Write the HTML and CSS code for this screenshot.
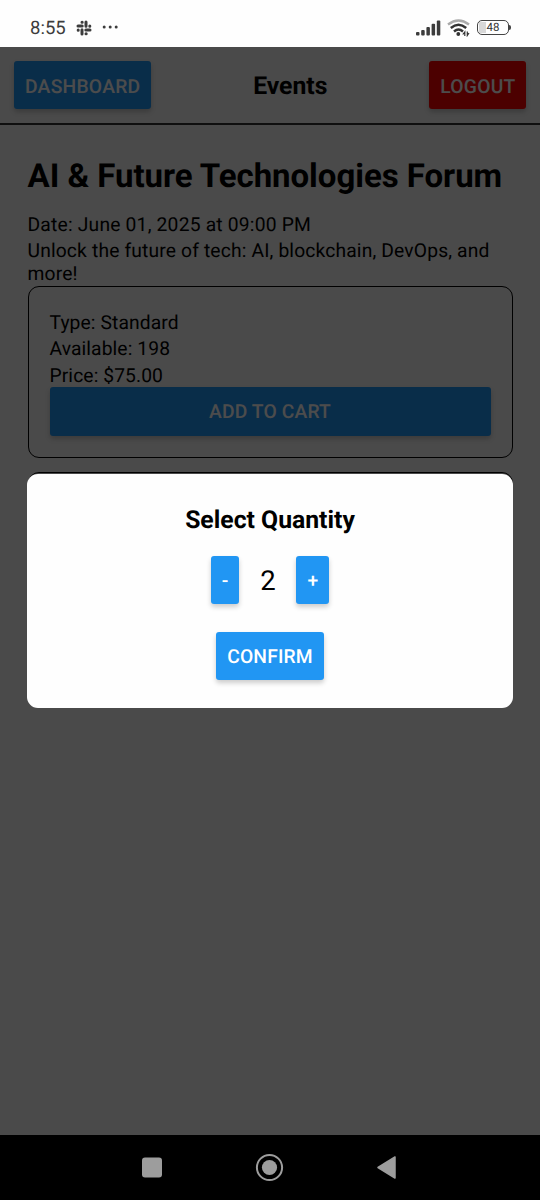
FILE: index.html
```html
<!DOCTYPE html>
<html lang="en">
<head>
<meta charset="utf-8">
<title>Events</title>
<link rel="stylesheet" href="styles.css">
</head>
<body>
<div class="status">
  <span class="clock">8:55</span>
  <svg class="slack" width="16" height="16" viewBox="0 0 16 16" fill="none" stroke="#3c3c3c" stroke-width="3" stroke-linecap="round"><path d="M2 6h4.200M10 2v4.200M9.800 10H14M6 9.800V14M6 2.200h.2M13.800 6v.2M10 13.800h.2M2.200 10v.2"/></svg>
  <svg class="dots" width="18" height="4" viewBox="0 0 18 4" fill="#3c3c3c"><circle cx="2.200" cy="2" r="1.500"/><circle cx="8.200" cy="2" r="1.500"/><circle cx="14.200" cy="2" r="1.500"/></svg>
  <span class="grow"></span>
  <svg class="signal" width="25" height="16" viewBox="0 0 25 16" fill="#3c3c3c"><rect x="0" y="12" width="3.500" height="3.500" rx="1"/><rect x="5.200" y="10" width="3.500" height="5.500" rx="1"/><rect x="10.400" y="7" width="3.500" height="8.500" rx="1"/><rect x="15.600" y="3.800" width="3.500" height="11.700" rx="1"/><rect x="20.800" y=".5" width="3.500" height="15" rx="1"/></svg>
  <svg class="wifi" width="24" height="18" viewBox="0 0 24 18" fill="none" stroke="#333" stroke-width="2.400"><path d="M1 5.500Q11.500-2.500 22 5.500" stroke="#aaa"/><path d="M3.800 9Q11.500 2.300 19.200 9"/><path d="M7 12.500Q11.500 8.500 16 12.500"/><circle cx="11.300" cy="15" r="1.900" fill="#333" stroke="none"/><path d="M17.800 17v-4l-2 2.500M20.300 12.500v4l1.700-2.500" stroke-width="1.200"/></svg>
  <div class="battery"><span class="charge"></span><span class="level">48</span></div><span class="cap"></span>
</div>
<div class="app">
  <header class="header">
    <button class="btn">DASHBOARD</button>
    <h2 class="screen-title">Events</h2>
    <button class="btn red">LOGOUT</button>
  </header>
  <main class="content">
    <h1 class="event-title">AI &amp; Future Technologies Forum</h1>
    <p class="line date">Date: June 01, 2025 at 09:00 PM</p>
    <p class="line about">Unlock the future of tech: AI, blockchain, DevOps, and more!</p>
    <section class="ticket">
      <p class="line">Type: Standard</p>
      <p class="line">Available: 198</p>
      <p class="line">Price: $75.00</p>
      <button class="btn">ADD TO CART</button>
    </section>
    <section class="ticket next"></section>
  </main>
  <div class="overlay">
    <div class="modal">
      <h2 class="modal-title">Select Quantity</h2>
      <div class="stepper">
        <button class="btn">-</button>
        <span class="count">2</span>
        <button class="btn">+</button>
      </div>
      <button class="btn">CONFIRM</button>
    </div>
  </div>
</div>
<nav class="navbar">
  <svg width="300" height="30" viewBox="0 0 300 30" fill="#9d9d9d"><rect x="22" y="4.500" width="20" height="20" rx="3"/><circle cx="149.500" cy="14.500" r="12.600" fill="none" stroke="#9d9d9d" stroke-width="2"/><circle cx="149.500" cy="14.500" r="7.600"/><path d="M258 14.500L275 4V25Z" stroke="#9d9d9d" stroke-width="1.500" stroke-linejoin="round"/></svg>
</nav>
</body>
</html>
```
FILE: styles.css
```css
* { box-sizing: border-box; margin: 0; padding: 0; }
body {
  width: 540px; height: 1200px; overflow: hidden;
  display: flex; flex-direction: column;
  font-family: Roboto, sans-serif; font-size: 19.25px; line-height: 22.5px; color: #000;
  text-rendering: geometricPrecision;
}
.status { height: 47px; display: flex; align-items: center; padding: 8px 29px 0 30px; background: #fefefe; color: #3c3c3c; }
.clock { font-size: 18.5px; width: 46px; padding-top: 1px; }
.dots { margin-left: 9.5px; margin-top: -1px; }
.grow { flex: 1; }
.wifi { margin: 1px 6.5px 0 6px; }
.battery { position: relative; width: 32px; height: 15px; border: 1.5px solid #444; border-radius: 5px; overflow: hidden; text-align: center; }
.charge { position: absolute; left: 1px; top: 1px; bottom: 1px; width: 7px; background: #d8d8d8; }
.level { position: relative; display: block; font-size: 11.5px; line-height: 13px; color: #333; }
.cap { width: 2px; height: 5px; background: #444; border-radius: 0 2px 2px 0; }
.app { position: relative; height: 1088px; background: #f7f7f7; }
.header { height: 78px; display: flex; justify-content: space-between; align-items: center; padding: 0 13.5px 0 14px; border-bottom: 2px solid #333; }
.btn {
  height: 48.5px; padding: 2px 11px 0; border: 0; border-radius: 3px;
  background: #2196f3; color: #fff; font: 500 19.25px/22px Roboto, sans-serif;
  letter-spacing: .15px; text-rendering: geometricPrecision;
  box-shadow: 0 3px 5px rgba(0,0,0,.2);
}
.header .btn { letter-spacing: .25px; padding-top: 3px; }
.red { background: #f00; }
.screen-title, .modal-title { font-size: 24.75px; line-height: 29px; font-weight: 700; }
.screen-title { padding-top: 2px; }
.content { padding: 28px 27.5px 0; }
.event-title { font-size: 33px; line-height: 48px; font-weight: 700; margin-bottom: 12.5px; white-space: nowrap; letter-spacing: -.04px; }
.line { padding-bottom: 4px; letter-spacing: .1px; }
.date { letter-spacing: .2px; }
.about { padding-bottom: 1px; letter-spacing: .15px; }
.ticket { display: flex; flex-direction: column; height: 172px; border: 1.5px solid #000; border-radius: 11px; padding: 24.5px 21px; }
.ticket .btn { margin-top: -4px; flex: none; }
.next { margin-top: 14px; }
.overlay { position: absolute; inset: 0; background: rgba(0,0,0,.7); display: flex; align-items: center; justify-content: center; }
.modal { width: 486px; height: 234px; margin-top: -1px; border-radius: 11px; background: #fefefe; display: flex; flex-direction: column; align-items: center; padding-top: 32px; }
.stepper { display: flex; align-items: center; margin: 21px 0 27.5px; }
.count { font-size: 27.5px; line-height: 32px; width: 57px; text-align: center; padding-top: 3px; }
.navbar { flex: 1; display: flex; align-items: center; justify-content: center; background: #000; }
```
